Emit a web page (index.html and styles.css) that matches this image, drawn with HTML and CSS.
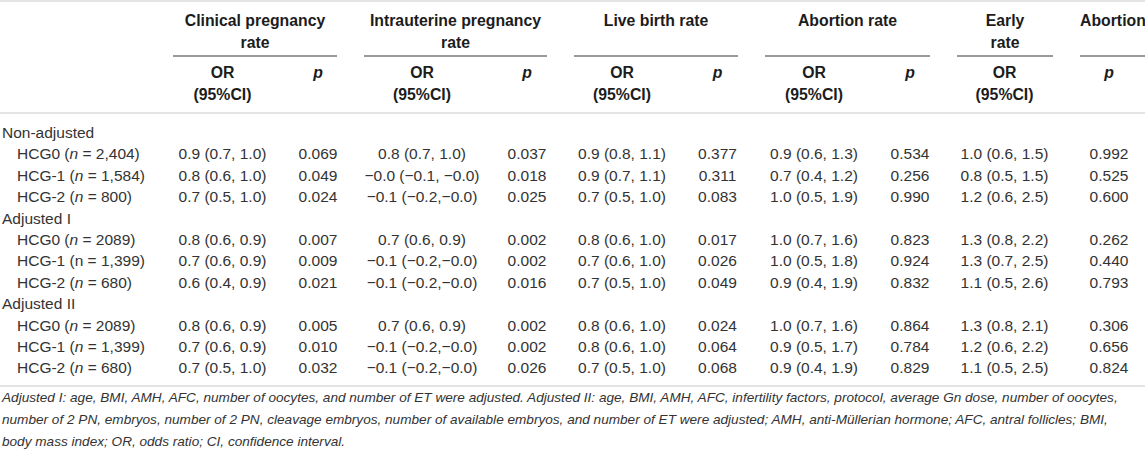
FILE: index.html
```html
<!DOCTYPE html>
<html lang="en">
<head>
<meta charset="utf-8">
<title>Odds ratios table</title>
<link rel="stylesheet" href="styles.css">
</head>
<body>
<div class="frame">
<table class="tbl">
<colgroup>
<col class="c-stub"><col class="c-or1"><col class="c-p1"><col class="c-or2"><col class="c-p2"><col class="c-or3"><col class="c-p3"><col class="c-or4"><col class="c-p4"><col class="c-or5"><col class="c-p6">
</colgroup>
<thead>
<tr class="grp">
<th></th>
<th colspan="2"><div class="gh">Clinical pregnancy<br>rate</div></th>
<th colspan="2"><div class="gh">Intrauterine pregnancy<br>rate</div></th>
<th colspan="2"><div class="gh">Live birth rate</div></th>
<th colspan="2"><div class="gh">Abortion rate</div></th>
<th><div class="gh">Early<br>rate</div></th>
<th><div class="gh gh-last">Abortion</div></th>
</tr>
<tr class="sub">
<th></th>
<th>OR<br>(95%CI)</th><th><i>p</i></th>
<th>OR<br>(95%CI)</th><th><i>p</i></th>
<th>OR<br>(95%CI)</th><th><i>p</i></th>
<th>OR<br>(95%CI)</th><th><i>p</i></th>
<th>OR<br>(95%CI)</th>
<th><i>p</i></th>
</tr>
</thead>
<tbody>
<tr class="first"><td class="sec">Non-adjusted</td><td></td><td></td><td></td><td></td><td></td><td></td><td></td><td></td><td></td><td></td></tr>
<tr><td class="lab">HCG0 (<i>n</i> = 2,404)</td><td>0.9 (0.7, 1.0)</td><td>0.069</td><td>0.8 (0.7, 1.0)</td><td>0.037</td><td>0.9 (0.8, 1.1)</td><td>0.377</td><td>0.9 (0.6, 1.3)</td><td>0.534</td><td>1.0 (0.6, 1.5)</td><td>0.992</td></tr>
<tr><td class="lab">HCG-1 (<i>n</i> = 1,584)</td><td>0.8 (0.6, 1.0)</td><td>0.049</td><td>−0.0 (−0.1, −0.0)</td><td>0.018</td><td>0.9 (0.7, 1.1)</td><td>0.311</td><td>0.7 (0.4, 1.2)</td><td>0.256</td><td>0.8 (0.5, 1.5)</td><td>0.525</td></tr>
<tr><td class="lab">HCG-2 (<i>n</i> = 800)</td><td>0.7 (0.5, 1.0)</td><td>0.024</td><td>−0.1 (−0.2,−0.0)</td><td>0.025</td><td>0.7 (0.5, 1.0)</td><td>0.083</td><td>1.0 (0.5, 1.9)</td><td>0.990</td><td>1.2 (0.6, 2.5)</td><td>0.600</td></tr>
<tr><td class="sec">Adjusted I</td><td></td><td></td><td></td><td></td><td></td><td></td><td></td><td></td><td></td><td></td></tr>
<tr><td class="lab">HCG0 (<i>n</i> = 2089)</td><td>0.8 (0.6, 0.9)</td><td>0.007</td><td>0.7 (0.6, 0.9)</td><td>0.002</td><td>0.8 (0.6, 1.0)</td><td>0.017</td><td>1.0 (0.7, 1.6)</td><td>0.823</td><td>1.3 (0.8, 2.2)</td><td>0.262</td></tr>
<tr><td class="lab">HCG-1 (n = 1,399)</td><td>0.7 (0.6, 0.9)</td><td>0.009</td><td>−0.1 (−0.2,−0.0)</td><td>0.002</td><td>0.7 (0.6, 1.0)</td><td>0.026</td><td>1.0 (0.5, 1.8)</td><td>0.924</td><td>1.3 (0.7, 2.5)</td><td>0.440</td></tr>
<tr><td class="lab">HCG-2 (<i>n</i> = 680)</td><td>0.6 (0.4, 0.9)</td><td>0.021</td><td>−0.1 (−0.2,−0.0)</td><td>0.016</td><td>0.7 (0.5, 1.0)</td><td>0.049</td><td>0.9 (0.4, 1.9)</td><td>0.832</td><td>1.1 (0.5, 2.6)</td><td>0.793</td></tr>
<tr><td class="sec">Adjusted II</td><td></td><td></td><td></td><td></td><td></td><td></td><td></td><td></td><td></td><td></td></tr>
<tr><td class="lab">HCG0 (<i>n</i> = 2089)</td><td>0.8 (0.6, 0.9)</td><td>0.005</td><td>0.7 (0.6, 0.9)</td><td>0.002</td><td>0.8 (0.6, 1.0)</td><td>0.024</td><td>1.0 (0.7, 1.6)</td><td>0.864</td><td>1.3 (0.8, 2.1)</td><td>0.306</td></tr>
<tr><td class="lab">HCG-1 (<i>n</i> = 1,399)</td><td>0.7 (0.6, 0.9)</td><td>0.010</td><td>−0.1 (−0.2,−0.0)</td><td>0.002</td><td>0.8 (0.6, 1.0)</td><td>0.064</td><td>0.9 (0.5, 1.7)</td><td>0.784</td><td>1.2 (0.6, 2.2)</td><td>0.656</td></tr>
<tr class="last"><td class="lab">HCG-2 (<i>n</i> = 680)</td><td>0.7 (0.5, 1.0)</td><td>0.032</td><td>−0.1 (−0.2,−0.0)</td><td>0.026</td><td>0.7 (0.5, 1.0)</td><td>0.068</td><td>0.9 (0.4, 1.9)</td><td>0.829</td><td>1.1 (0.5, 2.5)</td><td>0.824</td></tr>
</tbody>
</table>
<p class="note">Adjusted I: age, BMI, AMH, AFC, number of oocytes, and number of ET were adjusted. Adjusted II: age, BMI, AMH, AFC, infertility factors, protocol, average Gn dose, number of oocytes, number of 2 PN, embryos, number of 2 PN, cleavage embryos, number of available embryos, and number of ET were adjusted; AMH, anti-Müllerian hormone; AFC, antral follicles; BMI, body mass index; OR, odds ratio; CI, confidence interval.</p>
</div>
</body>
</html>
```
FILE: styles.css
```css
html, body {
  margin: 0;
  padding: 0;
  background: #ffffff;
}
body {
  font-family: "Liberation Sans", Arial, Helvetica, sans-serif;
  color: #333333;
}
.frame {
  width: 1145px;
  height: 453px;
  overflow: hidden;
}
.tbl {
  table-layout: fixed;
  width: 1152px;
  border-collapse: collapse;
  border-top: 2px solid #e4e4e4;
  border-bottom: 2px solid #e4e4e4;
  font-size: 15.5px;
}
.c-stub { width: 159px; }
.c-or1 { width: 127px; }
.c-p1 { width: 64px; }
.c-or2 { width: 144px; }
.c-p2 { width: 66px; }
.c-or3 { width: 124px; }
.c-p3 { width: 67px; }
.c-or4 { width: 126px; }
.c-p4 { width: 66px; }
.c-or5 { width: 123px; }
.c-p6 { width: 86px; }

.tbl th {
  font-size: 15.8px;
  font-weight: bold;
  color: #1c1c1c;
  text-align: center;
  vertical-align: top;
  line-height: 22px;
  padding: 0;
}
.grp th {
  padding-top: 8px;
}
.gh {
  height: 44px;
  margin: 0 13px 0 14px;
  padding-bottom: 1px;
  border-bottom: 2px solid #9a9a9a;
  white-space: nowrap;
}
.gh-last {
  margin-right: 0;
  padding-right: 12px;
}
.sub th {
  padding-top: 5px;
  padding-bottom: 6px;
  border-bottom: 2px solid #e4e4e4;
}
.tbl td {
  padding: 0;
  line-height: 21.4px;
  text-align: center;
  white-space: nowrap;
}
.tbl tr.first td {
  padding-top: 8px;
}
.tbl tr.last td {
  padding-bottom: 6px;
}
.tbl td.sec {
  text-align: left;
  padding-left: 2px;
}
.tbl td.lab {
  text-align: left;
  padding-left: 17px;
}
.note {
  margin: 0;
  padding: 0 0 0 2px;
  width: 1130px;
  font-style: italic;
  font-size: 13.6px;
  line-height: 22px;
  color: #333333;
}
```
